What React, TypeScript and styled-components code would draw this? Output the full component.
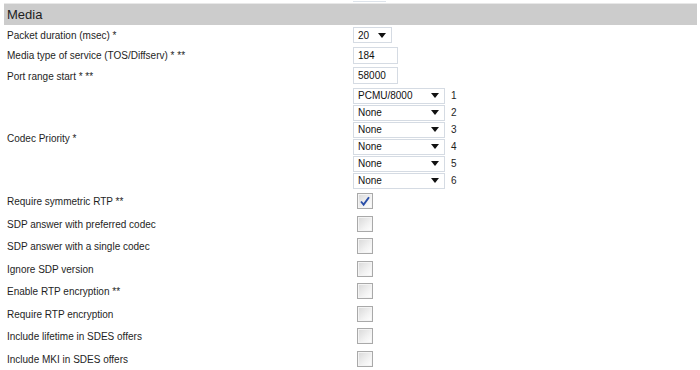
import React from 'react';
import styled, { createGlobalStyle } from 'styled-components';

const GlobalStyle = createGlobalStyle`
    body {
        margin: 0;
        background: #ffffff;
        font-family: "Liberation Sans", Arial, sans-serif;
        font-size: 10px;
        color: #1e1e1e;
    }
`

const Page = styled.div`
    width: 700px;
    height: 370px;
    overflow: hidden;
`

// bottom edge of the field that belongs to the section above, cut off by the window
const PrevField = styled.div`
    margin-left: 353px;
    width: 33px;
    height: 1px;
    border-bottom: 1px solid #dde3ea;
`

const SectionHeader = styled.div`
    margin: 1px 3px 0 4px;
    height: 21px;
    background: #cccccc;
    border-top: 1px solid #e8e8e8;
    display: flex;
    align-items: center;
    padding-left: 3px;
    font-size: 13px;
    color: #1e1e1e;
`

const Row = styled.div<{ h: number }>`
    display: grid;
    grid-template-columns: 346px 1fr;
    align-items: center;
    height: ${(p) => p.h}px;
    padding-left: 7px;
`

const Label = styled.div`
    white-space: nowrap;
    padding-top: 1px;
`

const Field = styled.div`
    display: flex;
    align-items: center;
`

const SelectBox = styled.div<{ w: number }>`
    box-sizing: border-box;
    width: ${(p) => p.w}px;
    height: 16px;
    border: 1px solid #d5dbe3;
    background: #ffffff;
    display: flex;
    align-items: center;
    justify-content: space-between;
    padding: 0 5px 0 4px;
    color: #111111;
`

const Arrow = styled.span`
    width: 0;
    height: 0;
    border-left: 4px solid transparent;
    border-right: 4px solid transparent;
    border-top: 5px solid #111111;
`

const TextBox = styled.div`
    box-sizing: border-box;
    width: 45px;
    height: 17px;
    border: 1px solid #d5dbe3;
    background: #ffffff;
    display: flex;
    align-items: center;
    padding-left: 4px;
    color: #111111;
`

const CodecList = styled.div`
    display: flex;
    flex-direction: column;
    gap: 1px;
`

const CodecLine = styled.div`
    display: flex;
    align-items: center;
    gap: 6px;
`

const CheckBox = styled.span`
    box-sizing: border-box;
    margin-left: 4px;
    width: 16px;
    height: 16px;
    border: 1px solid #a9a9a9;
    background: linear-gradient(135deg, #d8d8d8 0%, #f2f2f2 60%, #ffffff 100%);
    box-shadow: inset 0 0 0 1px #f4f4f4;
    display: flex;
    align-items: center;
    justify-content: center;
`

const Select = ({ value, w }: { value: string; w: number }) => (
    <SelectBox w={w}>
        <span>{value}</span>
        <Arrow />
    </SelectBox>
);

const Check = ({ checked }: { checked?: boolean }) => (
    <CheckBox>
        {checked && (
            <svg width="12" height="12" viewBox="0 0 12 12">
                <path d="M2 6.5 L4.6 9.6 L10 2.2" fill="none" stroke="#2b4fa8" strokeWidth="1.9" />
            </svg>
        )}
    </CheckBox>
);

const codecs = ['PCMU/8000', 'None', 'None', 'None', 'None', 'None'];

const options = [
    { label: 'Require symmetric RTP **', checked: true },
    { label: 'SDP answer with preferred codec' },
    { label: 'SDP answer with a single codec' },
    { label: 'Ignore SDP version' },
    { label: 'Enable RTP encryption **' },
    { label: 'Require RTP encryption' },
    { label: 'Include lifetime in SDES offers' },
    { label: 'Include MKI in SDES offers' },
];

export default function App() {
    return (
        <Page>
            <GlobalStyle />
            <PrevField />
            <SectionHeader>Media</SectionHeader>
            <Row h={20}>
                <Label>Packet duration (msec) *</Label>
                <Field><Select value="20" w={39} /></Field>
            </Row>
            <Row h={20}>
                <Label>Media type of service (TOS/Diffserv) * **</Label>
                <Field><TextBox>184</TextBox></Field>
            </Row>
            <Row h={21}>
                <Label>Port range start * **</Label>
                <Field><TextBox>58000</TextBox></Field>
            </Row>
            <Row h={104}>
                <Label>Codec Priority *</Label>
                <CodecList>
                    {codecs.map((c, i) => (
                        <CodecLine key={i}>
                            <Select value={c} w={92} />
                            <span>{i + 1}</span>
                        </CodecLine>
                    ))}
                </CodecList>
            </Row>
            {options.map((o) => (
                <Row h={22.5} key={o.label}>
                    <Label>{o.label}</Label>
                    <Field><Check checked={o.checked} /></Field>
                </Row>
            ))}
        </Page>
    );
}
